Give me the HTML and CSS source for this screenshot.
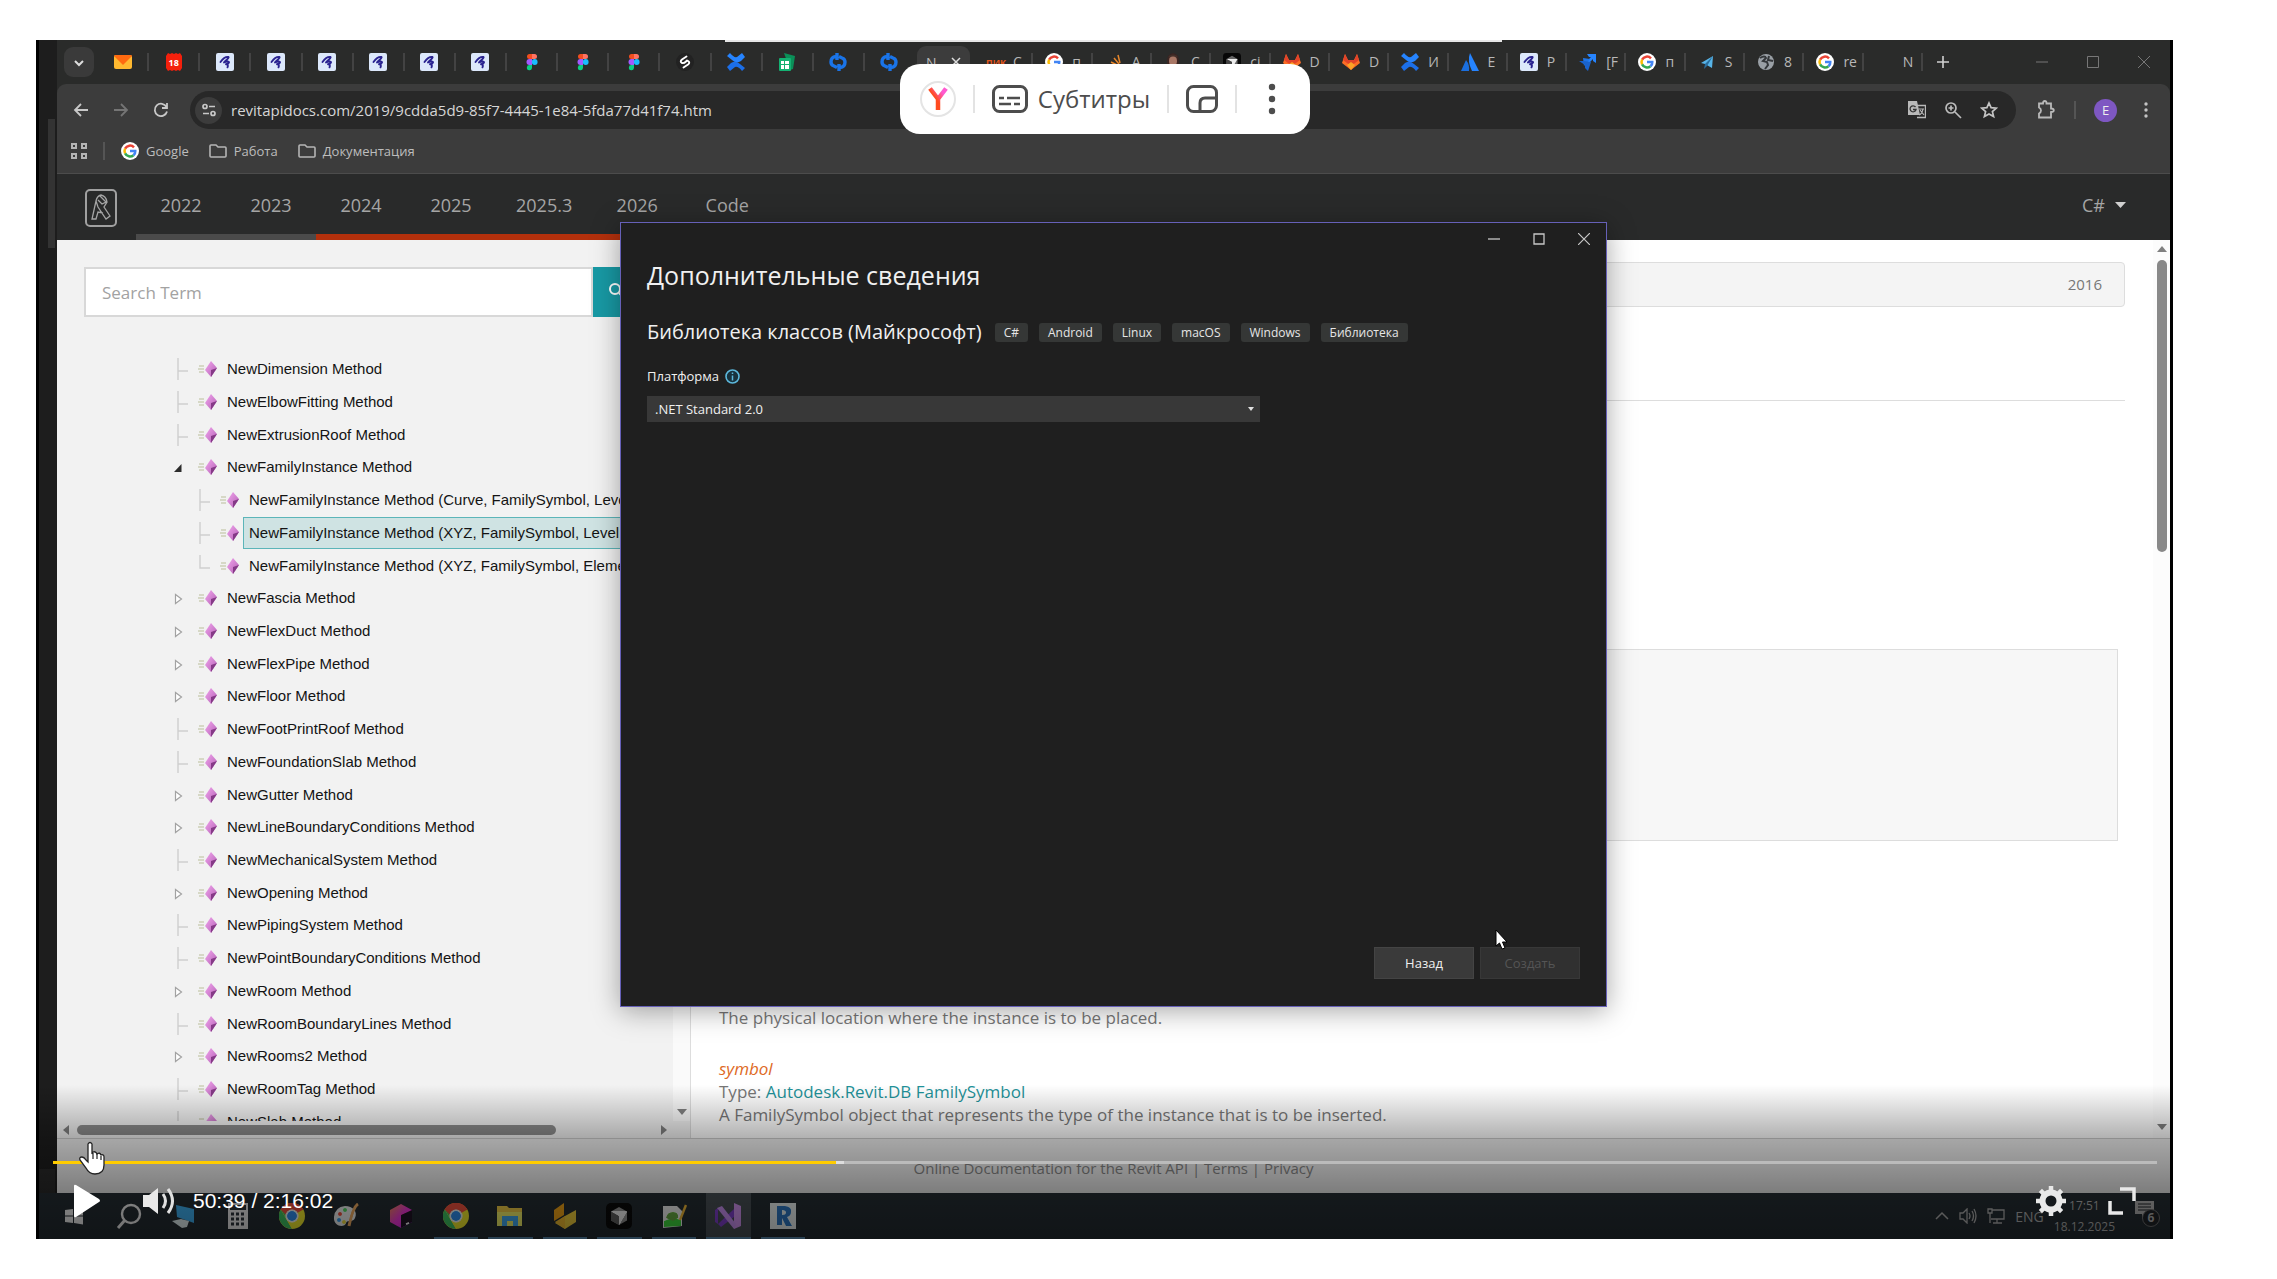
FILE: index.html
```html
<!DOCTYPE html>
<html lang="ru">
<head>
<meta charset="utf-8">
<title>Видео</title>
<link rel="stylesheet" href="styles.css">
</head>
<body>
<svg class="defs" aria-hidden="true">
  <defs>
    <linearGradient id="grad-pink" x1="0" y1="0" x2="1" y2="1"><stop offset="0" stop-color="#f3a6ee"/><stop offset="1" stop-color="#b25fb4"/></linearGradient>
    <linearGradient id="grad-y" x1="0" y1="1" x2="1" y2="0"><stop offset=".45" stop-color="#ff4b1f"/><stop offset=".8" stop-color="#ff5ad0"/></linearGradient>
    <linearGradient id="grad-box" x1="0" y1="0" x2="1" y2="1"><stop offset="0" stop-color="#e0613a"/><stop offset=".5" stop-color="#c0269a"/><stop offset="1" stop-color="#5a1fa0"/></linearGradient>
    <symbol id="mail" viewBox="0 0 18 18"><rect y="2" width="18" height="14" rx="2" fill="#ffb930"/><path d="M0 3q0-1 2-1h14q2 0 2 1L9 12z" fill="#ff6a10"/></symbol>
    <symbol id="cal" viewBox="0 0 18 18"><path d="M3 0l2 1 2-1 2 1 2-1 2 1 2-1 2 3v12l-2 3-2-1-2 1-2-1-2 1-2-1-2 1-2-3V3z" fill="#f4200c"/></symbol>
    <symbol id="squig" viewBox="0 0 18 18"><rect width="18" height="18" rx="2" fill="#dce8fb"/><path d="M4.500 9C7 5.500 10 3.500 12.500 4c1 1-3.500 4-4.500 5.500 2-1 5.500-1.500 5 0-.5 1-1.500 1.500-3 1.800 1.500 0 2.500 1 1.500 3" fill="none" stroke="#2a2390" stroke-width="1.900" stroke-linecap="round" stroke-linejoin="round"/></symbol>
    <symbol id="figma" viewBox="0 0 18 18"><path d="M9 1v5H6.500a2.500 2.500 0 0 1 0-5z" fill="#f24e1e"/><path d="M9 1h2.500a2.500 2.500 0 0 1 0 5H9z" fill="#ff7262"/><path d="M9 6v6H6.500a3 3 0 0 1 0-6z" fill="#a259ff"/><circle cx="11.700" cy="9" r="2.900" fill="#1abcfe"/><path d="M6.500 12H9v3a2.600 2.600 0 1 1-2.500-3z" fill="#0acf83"/></symbol>
    <symbol id="coil" viewBox="0 0 18 18"><circle cx="9" cy="9" r="9" fill="#222"/><path d="M10.500 3.500L6 6.500q-2.500 2 0 3.500 2 .5 4-1.500l1-1M7.500 14.500l4.500-3q2.500-2 0-3.500" fill="none" stroke="#fff" stroke-width="1.900" stroke-linecap="round"/></symbol>
    <symbol id="conf" viewBox="0 0 18 18"><path d="M0 3l3-3q4 5 7 4l5-4 3 4-4 4q-5 3-9-1z" fill="#2684ff"/><path d="M18 15l-3 3q-4-5-7-4l-5 4-3-4 4-4q5-3 9 1z" fill="#1c6fe8"/></symbol>
    <symbol id="sheet" viewBox="0 0 18 18"><path d="M6 0l11 3-2 13-3 1z" fill="#0b8f58"/><rect x="1" y="5" width="12" height="13" rx="1" fill="#14b172"/><path d="M3 8h3v3H3zM7 8h4v3H7zM3 12h3v4H3zM7 12h4v4H7z" fill="#fff"/></symbol>
    <symbol id="code" viewBox="0 0 18 18"><path d="M7 3.500Q2 4 2 9q0 3 3 4l3 1.500M11 14.500Q16 14 16 9q0-3-3-4l-3-1.500M8 0v7M10 11v7" fill="none" stroke="#1a74e8" stroke-width="3.400"/></symbol>
    <symbol id="goog" viewBox="0 0 18 18"><circle cx="9" cy="9" r="9" fill="#fff"/><g fill="none" stroke-width="2.500"><path d="M13 5.300A5.500 5.500 0 0 0 4.100 6.600" stroke="#ea4335"/><path d="M4.100 6.600a5.500 5.500 0 0 0 0 4.800" stroke="#fbbc05"/><path d="M4.100 11.400A5.500 5.500 0 0 0 12.500 13.200" stroke="#34a853"/><path d="M12.500 13.200Q14.500 11.500 14.300 9H9" stroke="#4285f4"/></g></symbol>
    <symbol id="stack" viewBox="0 0 18 18"><path d="M4 16h8M5 12.500l7 1M6 9l7 3.500M9 5l5 6M13 2l2 8" stroke="#e8862a" stroke-width="1.500"/></symbol>
    <symbol id="face" viewBox="0 0 18 18"><path d="M3 18V8q0-7 6-8 6 1 6 8v10z" fill="#3a2522"/><ellipse cx="9" cy="8" rx="4" ry="6" fill="#a97866"/><path d="M5 4q4-3 8 0" stroke="#45302a" stroke-width="2" fill="none"/></symbol>
    <symbol id="cursorapp" viewBox="0 0 26 26"><rect width="26" height="26" rx="5" fill="#070707"/><path d="M13 4l8 4.500v9L13 22l-8-4.500v-9z" fill="#666"/><path d="M5 8.500h16L13 22v-9z" fill="#ececec"/><path d="M5 8.500L13 13v9l-8-4.500z" fill="#444"/></symbol>
    <symbol id="gitlab" viewBox="0 0 18 18"><path d="M3 1l3 6h6l3-6 3 9-9 7-9-7z" fill="#fc6d26"/><path d="M3 1l3 6h6l3-6 2 6-8 6-8-6z" fill="#e24329"/><path d="M5 12l4-3 4 3-4 5z" fill="#fca326"/></symbol>
    <symbol id="atl" viewBox="0 0 18 18"><path d="M9 0l9 18h-7Q6 8 9 0z" fill="#2684ff"/><path d="M5 7q4 5 3 11H0z" fill="#1a6fe0"/></symbol>
    <symbol id="jira" viewBox="0 0 18 18"><path d="M8 1h9v9l-3-2V6l-5 5-2-2 5-5h-2z" fill="#2684ff"/><path d="M4 5l7 1-6 7z" fill="#1f75e6"/><path d="M0 8h5l7 1-3 9-3-3v-3z" fill="#1a63cc"/></symbol>
    <symbol id="plane" viewBox="0 0 18 18"><path d="M15 3L3 10l4 1 7 4z" fill="#57b4e8"/><path d="M15 3L7 11l-1 5 3-3z" fill="#2a6d9c"/></symbol>
    <symbol id="globe" viewBox="0 0 18 18"><circle cx="9" cy="9" r="8" fill="#9aa0a6"/><path d="M3 5q5-3 6 0l-3 3 4 1 1 3-3 4M12 3l-1 4 5 1" fill="none" stroke="#34373a" stroke-width="2"/></symbol>
    <symbol id="folder" viewBox="0 0 18 16"><path d="M2 2h5l2 2h7q1 0 1 1v8q0 1-1 1H2q-1 0-1-1V3q0-1 1-1z" fill="none" stroke="#b5b5b5" stroke-width="1.600"/></symbol>
    <symbol id="leaf" viewBox="0 0 20 22"><path d="M6 0v22M6 13h10" stroke="#cfcfcf" fill="none" stroke-width="1.400"/></symbol>
    <symbol id="leaf-end" viewBox="0 0 20 22"><path d="M6 0v13h10" stroke="#cfcfcf" fill="none" stroke-width="1.400"/></symbol>
    <symbol id="closed" viewBox="0 0 20 22"><path d="M3.500 7.500v9l6-4.500z" stroke="#a2a2a2" fill="#fff" stroke-width="1.200"/></symbol>
    <symbol id="open" viewBox="0 0 20 22"><path d="M2 16h7.500V8z" fill="#2c2c2c"/></symbol>
    <symbol id="method" viewBox="0 0 22 18"><path d="M2 6h5M1 9h6M2 12h5" stroke="#cdd0b8" stroke-width="1.300"/><path d="M14 1l6 7-6 9-6-7z" fill="url(#grad-pink)"/><path d="M14 10l6-2-6 9z" fill="#853a87"/></symbol>
    <symbol id="chrome" viewBox="0 0 26 26"><circle cx="13" cy="13" r="13" fill="#d9a520"/><path d="M13 13L1.700 6.500A13 13 0 0 1 24.300 6.500z" fill="#b8392c"/><path d="M1.700 6.500L13 26A13 13 0 0 1 1.700 6.500z" fill="#2c8a45"/><path d="M1.700 6.500L7.500 16 13 13z" fill="#2c8a45"/><path d="M13 7h11.500A13 13 0 0 0 1.700 6.500L8 13z" fill="#b8392c"/><circle cx="13" cy="13" r="6.500" fill="#cfd3d3"/><circle cx="13" cy="13" r="5" fill="#2265b5"/></symbol>
  </defs>
</svg>

<main class="player">
  <div class="desktop">
    <div class="behind"><span class="behind-thumb"></span><span class="behind-foot"></span></div>
    <div class="browser">
      <div class="tabs">
        <button class="tab-search" aria-label="Поиск вкладок"><svg width="12" height="8" viewBox="0 0 12 8"><path d="M2 1l4 4 4-4" fill="none" stroke="#ddd" stroke-width="2"/></svg></button>
        <div class="pinned">
          <span><svg><use href="#mail"/></svg></span>
          <span class="count"><svg><use href="#cal"/></svg><b>18</b></span>
          <span><svg><use href="#squig"/></svg></span><span><svg><use href="#squig"/></svg></span><span><svg><use href="#squig"/></svg></span><span><svg><use href="#squig"/></svg></span><span><svg><use href="#squig"/></svg></span><span><svg><use href="#squig"/></svg></span>
          <span><svg><use href="#figma"/></svg></span><span><svg><use href="#figma"/></svg></span><span><svg><use href="#figma"/></svg></span>
          <span><svg><use href="#coil"/></svg></span><span><svg><use href="#conf"/></svg></span><span><svg><use href="#sheet"/></svg></span><span><svg><use href="#code"/></svg></span><span><svg><use href="#code"/></svg></span>
        </div>
        <div class="tab-active">N<svg viewBox="0 0 10 10" width="10" height="10"><path d="M1 1l8 8M9 1L1 9" stroke="#ddd" stroke-width="1.500"/></svg></div>
        <div class="titled">
          <span><i class="pik">ПИК</i>C</span><span><svg><use href="#goog"/></svg>п</span><span><svg><use href="#stack"/></svg>A</span><span><svg><use href="#face"/></svg>C</span><span><svg><use href="#cursorapp"/></svg>ci</span><span><svg><use href="#gitlab"/></svg>D</span><span><svg><use href="#gitlab"/></svg>D</span><span><svg><use href="#conf"/></svg>И</span><span><svg><use href="#atl"/></svg>E</span><span><svg><use href="#squig"/></svg>P</span><span><svg><use href="#jira"/></svg>[F</span><span><svg><use href="#goog"/></svg>п</span><span><svg><use href="#plane"/></svg>S</span><span><svg><use href="#globe"/></svg>8</span><span><svg><use href="#goog"/></svg>re</span><span><svg></svg>N</span>
        </div>
        <button class="new-tab" aria-label="Новая вкладка"><svg width="12" height="12" viewBox="0 0 12 12"><path d="M6 0v12M0 6h12" stroke="#d0d0d0" stroke-width="1.600"/></svg></button>
        <div class="win-buttons">
          <svg viewBox="0 0 12 12"><path d="M0 6h12" stroke="#777"/></svg>
          <svg viewBox="0 0 12 12"><path d="M.5.5h11v11H.5z" fill="none" stroke="#777"/></svg>
          <svg viewBox="0 0 12 12"><path d="M0 0l12 12M12 0L0 12" stroke="#777"/></svg>
        </div>
      </div>

      <div class="toolbar">
        <div class="nav-buttons">
          <svg viewBox="0 0 16 16"><path d="M15 8H2M8 2L2 8l6 6" fill="none" stroke="#c8c8c8" stroke-width="1.800"/></svg>
          <svg viewBox="0 0 16 16"><path d="M1 8h13M8 2l6 6-6 6" fill="none" stroke="#757575" stroke-width="1.800"/></svg>
          <svg viewBox="0 0 16 16"><path d="M13.500 5A6.200 6.200 0 1 0 14 9.500M14 1v5H9" fill="none" stroke="#c8c8c8" stroke-width="1.800"/></svg>
        </div>
        <div class="omnibox">
          <span class="site"><svg width="14" height="14" viewBox="0 0 14 14" fill="none" stroke="#c8c8c8" stroke-width="1.700"><circle cx="3" cy="3.500" r="2"/><path d="M7 3.500h6M1 10.500h6"/><circle cx="11" cy="10.500" r="2"/></svg></span>
          <input type="text" class="url" aria-label="Адрес" value="revitapidocs.com/2019/9cdda5d9-85f7-4445-1e84-5fda77d41f74.htm">
          <svg width="18" height="18" viewBox="0 0 18 18"><path d="M0 0h9l3 14H0z" fill="#b9b9b9"/><path d="M8.500 4.500h9v12H9" fill="none" stroke="#b9b9b9" stroke-width="1.400"/><path d="M7.500 6A3 3 0 1 0 8 8.500H5" fill="none" stroke="#333" stroke-width="1.300"/><path d="M10.500 8h5.500M11 14q3-1 4-6M12 9l4 5" fill="none" stroke="#b9b9b9" stroke-width="1.200"/></svg>
          <svg width="18" height="18" viewBox="0 0 18 18" fill="none" stroke="#bcbcbc" stroke-width="1.700"><circle cx="7" cy="7" r="5"/><path d="M11 11l6 6M4.500 7h5M7 4.500v5"/></svg>
          <svg width="18" height="18" viewBox="0 0 18 18"><path d="M9 2l2.100 4.700 5.200.500-3.900 3.400 1.200 5L9 12.900l-4.600 2.700 1.200-5L1.700 7.200l5.200-.5z" fill="none" stroke="#c4c4c4" stroke-width="1.700"/></svg>
        </div>
        <svg width="20" height="20" viewBox="0 0 20 20"><path d="M3 3.500h4q0-2.500 1.800-2.500t1.700 2.500H15v5q2.800 0 2.800 1.700T15 12v5.500H3v-4q2-1 2-3t-2-3z" fill="none" stroke="#b9b9b9" stroke-width="1.800"/></svg>
        <span class="rule"></span>
        <span class="avatar">E</span>
        <svg class="kebab" width="4" height="16" viewBox="0 0 4 16" fill="#c4c4c4"><circle cx="2" cy="2" r="1.700"/><circle cx="2" cy="8" r="1.700"/><circle cx="2" cy="14" r="1.700"/></svg>
      </div>

      <div class="bookmarks">
        <svg width="16" height="16" viewBox="0 0 16 16" fill="none" stroke="#b5b5b5" stroke-width="2"><path d="M1 1h4v4H1zM11 1h4v4h-4zM1 11h4v4H1zM11 11h4v4h-4z"/></svg>
        <span class="rule"></span>
        <a href="#"><svg width="18" height="18"><use href="#goog"/></svg>Google</a>
        <a href="#"><svg width="18" height="16"><use href="#folder"/></svg>Работа</a>
        <a href="#"><svg width="18" height="16"><use href="#folder"/></svg>Документация</a>
      </div>

      <nav class="site-nav">
        <a href="#" class="logo" aria-label="Revit API Docs"><svg width="22" height="30" viewBox="0 0 22 30" fill="none" stroke="#a5a5a5" stroke-width="1.300"><path d="M6 8q1-5 5-6 5 1 6 7l-3 5 6 9-4 3L8 14zM6 8L2 26h4l2-7 5 1M10 3l6 6-4 2-4-4"/></svg></a>
        <a href="#" class="old">2022</a><a href="#" class="old">2023</a><a href="#">2024</a><a href="#">2025</a><a href="#">2025.3</a><a href="#">2026</a><a href="#" class="plain">Code</a>
        <button class="lang">C#<svg width="11" height="6" viewBox="0 0 11 6"><path d="M0 0h11L5.500 6z" fill="#d0d0d0"/></svg></button>
      </nav>

      <div class="page">
        <aside class="sidebar">
          <form class="search"><input type="text" placeholder="Search Term" aria-label="Search Term"><button type="button" aria-label="Search"><svg width="16" height="16" viewBox="0 0 16 16" fill="none" stroke="#fff" stroke-width="2"><circle cx="7" cy="7" r="5"/><path d="M11 11l4 4"/></svg></button></form>
          <div class="tree-view">
            <div class="tree-clip">
              <ul class="tree">
                <li><svg class="ex"><use href="#leaf"/></svg><svg class="me"><use href="#method"/></svg><a href="#">NewDimension Method</a></li>
                <li><svg class="ex"><use href="#leaf"/></svg><svg class="me"><use href="#method"/></svg><a href="#">NewElbowFitting Method</a></li>
                <li><svg class="ex"><use href="#leaf"/></svg><svg class="me"><use href="#method"/></svg><a href="#">NewExtrusionRoof Method</a></li>
                <li><svg class="ex"><use href="#open"/></svg><svg class="me"><use href="#method"/></svg><a href="#">NewFamilyInstance Method</a></li>
                <li class="sub"><svg class="ex"><use href="#leaf"/></svg><svg class="me"><use href="#method"/></svg><a href="#">NewFamilyInstance Method (Curve, FamilySymbol, Level)</a></li>
                <li class="sub"><svg class="ex"><use href="#leaf"/></svg><svg class="me"><use href="#method"/></svg><a href="#" class="selected">NewFamilyInstance Method (XYZ, FamilySymbol, Level, Type)</a></li>
                <li class="sub"><svg class="ex"><use href="#leaf-end"/></svg><svg class="me"><use href="#method"/></svg><a href="#">NewFamilyInstance Method (XYZ, FamilySymbol, Element)</a></li>
                <li><svg class="ex"><use href="#closed"/></svg><svg class="me"><use href="#method"/></svg><a href="#">NewFascia Method</a></li>
                <li><svg class="ex"><use href="#closed"/></svg><svg class="me"><use href="#method"/></svg><a href="#">NewFlexDuct Method</a></li>
                <li><svg class="ex"><use href="#closed"/></svg><svg class="me"><use href="#method"/></svg><a href="#">NewFlexPipe Method</a></li>
                <li><svg class="ex"><use href="#closed"/></svg><svg class="me"><use href="#method"/></svg><a href="#">NewFloor Method</a></li>
                <li><svg class="ex"><use href="#leaf"/></svg><svg class="me"><use href="#method"/></svg><a href="#">NewFootPrintRoof Method</a></li>
                <li><svg class="ex"><use href="#leaf"/></svg><svg class="me"><use href="#method"/></svg><a href="#">NewFoundationSlab Method</a></li>
                <li><svg class="ex"><use href="#closed"/></svg><svg class="me"><use href="#method"/></svg><a href="#">NewGutter Method</a></li>
                <li><svg class="ex"><use href="#closed"/></svg><svg class="me"><use href="#method"/></svg><a href="#">NewLineBoundaryConditions Method</a></li>
                <li><svg class="ex"><use href="#leaf"/></svg><svg class="me"><use href="#method"/></svg><a href="#">NewMechanicalSystem Method</a></li>
                <li><svg class="ex"><use href="#closed"/></svg><svg class="me"><use href="#method"/></svg><a href="#">NewOpening Method</a></li>
                <li><svg class="ex"><use href="#leaf"/></svg><svg class="me"><use href="#method"/></svg><a href="#">NewPipingSystem Method</a></li>
                <li><svg class="ex"><use href="#leaf"/></svg><svg class="me"><use href="#method"/></svg><a href="#">NewPointBoundaryConditions Method</a></li>
                <li><svg class="ex"><use href="#closed"/></svg><svg class="me"><use href="#method"/></svg><a href="#">NewRoom Method</a></li>
                <li><svg class="ex"><use href="#leaf"/></svg><svg class="me"><use href="#method"/></svg><a href="#">NewRoomBoundaryLines Method</a></li>
                <li><svg class="ex"><use href="#closed"/></svg><svg class="me"><use href="#method"/></svg><a href="#">NewRooms2 Method</a></li>
                <li><svg class="ex"><use href="#leaf"/></svg><svg class="me"><use href="#method"/></svg><a href="#">NewRoomTag Method</a></li>
                <li><svg class="ex"><use href="#leaf"/></svg><svg class="me"><use href="#method"/></svg><a href="#">NewSlab Method</a></li>
              </ul>
            </div>
            <div class="vtrack"><svg width="10" height="6" viewBox="0 0 10 6"><path d="M0 0h10L5 6z" fill="#808080"/></svg></div>
            <div class="htrack"><svg width="6" height="10" viewBox="0 0 6 10"><path d="M6 0v10L0 5z" fill="#808080"/></svg><span></span><svg class="right" width="6" height="10" viewBox="0 0 6 10"><path d="M0 0v10l6-5z" fill="#808080"/></svg></div>
          </div>
        </aside>
        <section class="content">
          <div class="versions">2016</div>
          <hr>
          <pre class="syntax"></pre>
          <p>The physical location where the instance is to be placed.</p>
          <p class="param"><em>symbol</em><br>Type: <a href="#">Autodesk.Revit.DB FamilySymbol</a><br>A FamilySymbol object that represents the type of the instance that is to be inserted.</p>
        </section>
        <div class="scrollbar"><svg width="10" height="6" viewBox="0 0 10 6"><path d="M0 6h10L5 0z" fill="#808080"/></svg><span></span><svg class="down" width="10" height="6" viewBox="0 0 10 6"><path d="M0 0h10L5 6z" fill="#808080"/></svg></div>
      </div>
      <footer class="site-foot">Online Documentation for the Revit API | Terms | Privacy</footer>
    </div>
  </div>

  <div class="taskbar">
    <div class="apps">
      <span><svg width="18" height="18" viewBox="0 0 18 18"><path d="M0 3l8-1v6.500H0zM9 2l9-1.500v8H9zM0 9.500h8V16l-8-1zM9 9.500h9v8L9 16z" fill="#b5b5b5"/></svg></span>
      <span><svg width="26" height="26" viewBox="0 0 26 26"><path d="M9 17l-7 8" stroke="#a8a8a8" stroke-width="3"/><circle cx="15" cy="11" r="9" fill="none" stroke="#a8a8a8" stroke-width="2.400"/></svg></span>
      <span><svg width="26" height="26" viewBox="0 0 26 26"><path d="M6 2l18 4v14L7 14z" fill="#2c7cb0"/><path d="M2 18l9-2 8 2-2 6-5 1z" fill="#9fa9ad"/></svg></span>
      <span><svg width="20" height="26" viewBox="0 0 20 26"><path d="M0 0h20v26H0z" fill="#a5a5a5"/><path d="M2 2h16v5H2z" fill="#20252a"/><path d="M3 11h14M3 16h14M3 21h14" stroke="#20252a" stroke-width="3" stroke-dasharray="3 2"/></svg></span>
      <span><svg width="26" height="26"><use href="#chrome"/></svg></span>
      <span><svg width="28" height="26" viewBox="0 0 28 26"><path d="M12 3c8 0 13 6 10 12-2 5-7 1-9 5-1 5-13 4-12-6Q2 4 12 3z" fill="#a9b8c0"/><circle cx="7" cy="11" r="2" fill="#c0392b"/><circle cx="12" cy="7" r="2" fill="#3f9a45"/><circle cx="6" cy="17" r="2" fill="#2b70b0"/><circle cx="11" cy="19" r="2" fill="#d19c2d"/><path d="M25 1q-5 3-9 22" stroke="#b07a45" stroke-width="3" fill="none"/></svg></span>
      <span><svg width="24" height="26" viewBox="0 0 24 26"><path d="M12 1l11 6v12l-11 6L1 19V7z" fill="url(#grad-box)"/><path d="M12 12l11-5v12l-11 6z" fill="#160d1a"/><path d="M17 21l3-1" stroke="#ddd" stroke-width="1.500"/></svg></span>
      <span class="run"><svg width="26" height="26"><use href="#chrome"/></svg></span>
      <span class="run"><svg width="26" height="24" viewBox="0 0 26 24"><path d="M0 2h10l2 2h13v18H0z" fill="#bd9032"/><path d="M0 8h25v14H0z" fill="#d2a94a"/><path d="M5 12h16v10h-5v-5h-6v5H5z" fill="#2d78b5"/></svg></span>
      <span class="run"><svg width="24" height="26" viewBox="0 0 24 26"><path d="M11 0v12L1 18V7z" fill="#c67310"/><path d="M12 13l11-6v12l-11 7-10-6z" fill="#e0912a"/><path d="M12 13v13L2 19z" fill="#cf8422"/></svg></span>
      <span class="run"><svg width="26" height="26"><use href="#cursorapp"/></svg></span>
      <span class="run"><svg width="26" height="26" viewBox="0 0 26 26"><path d="M2 3h14l5 5v15l-19 2z" fill="#bfc6bd"/><path d="M3 18q8-4 17-1v6L3 24z" fill="#2c9a2c"/><path d="M5 15q1-6 7-6t5 6l-5 3z" fill="#4a7a30"/><path d="M25 2l-6 15" stroke="#b98227" stroke-width="2.500"/></svg></span>
      <span class="run current"><svg width="26" height="26" viewBox="0 0 26 26"><path d="M19 0l7 3v20l-7 3z" fill="#9468c8"/><path d="M0 7l3-2v16l-3-2z" fill="#5b2d91"/><path d="M3 21L19 6v8L6 24z" fill="#5b2d91"/><path d="M2 5l5-2 14 18-2 5z" fill="#8d66b8"/></svg></span>
      <span class="run"><svg width="26" height="26" viewBox="0 0 26 26"><rect width="26" height="26" fill="#a5b6c8"/><path d="M7 3h8q7 1 6 6 0 4-4 5l5 9h-6l-4-8v7H7zM12 7v5q4 0 4-2.500T12 7z" fill="#205489" fill-rule="evenodd"/></svg></span>
    </div>
    <div class="tray">
      <svg width="14" height="10" viewBox="0 0 14 10"><path d="M1 8l6-6 6 6" fill="none" stroke="#bbb" stroke-width="1.500"/></svg>
      <svg width="18" height="16" viewBox="0 0 18 16" fill="none" stroke="#bbb" stroke-width="1.300"><path d="M1 5h3l4-4v14l-4-4H1zM10 5q2 3 0 6M13 3q3 5 0 10M15 1q4 7 0 14"/></svg>
      <svg width="18" height="16" viewBox="0 0 18 16" fill="none" stroke="#bbb" stroke-width="1.300"><path d="M5 2h12v9H4M10 11v4M6 15h9M1 1h4v4H1zM3 5v10"/></svg>
      <span>ENG</span>
      <span class="clock">17:51<br>18.12.2025</span>
      <span class="notice"><svg width="20" height="18" viewBox="0 0 20 18"><path d="M0 0h19v13h-8l-4 5v-5H0z" fill="#bbb"/><path d="M3 3h13M3 6h13M3 9h13" stroke="#22262a"/></svg><b>6</b></span>
    </div>
  </div>

  <div class="top-line"></div>

  <section class="dialog" role="dialog" aria-labelledby="dlg-title">
    <div class="dialog-controls">
      <svg viewBox="0 0 12 12"><path d="M0 6h12" stroke="#c8c8c8" stroke-width="1.300"/></svg>
      <svg viewBox="0 0 12 12"><path d="M1 1h10v10H1z" fill="none" stroke="#c8c8c8" stroke-width="1.300"/></svg>
      <svg viewBox="0 0 12 12"><path d="M0 0l12 12M12 0L0 12" stroke="#c8c8c8" stroke-width="1.200"/></svg>
    </div>
    <h1 id="dlg-title">Дополнительные сведения</h1>
    <div class="template"><h2>Библиотека классов (Майкрософт)</h2><span>C#</span><span>Android</span><span>Linux</span><span>macOS</span><span>Windows</span><span>Библиотека</span></div>
    <label class="field-label" for="platform">Платформа <svg width="15" height="15" viewBox="0 0 15 15"><circle cx="7.500" cy="7.500" r="6.500" fill="#18333e" stroke="#5cb8dc" stroke-width="1.600"/><path d="M7.500 6.500v5M7.500 3.500v1.500" stroke="#5cb8dc" stroke-width="1.500"/></svg></label>
    <div class="select"><select id="platform"><option>.NET Standard 2.0</option></select><svg width="6" height="4" viewBox="0 0 6 4"><path d="M0 0h6L3 4z" fill="#e0e0e0"/></svg></div>
    <div class="dialog-actions"><button>Назад</button><button disabled>Создать</button></div>
    <svg class="pointer" width="14" height="22" viewBox="0 0 14 22"><path d="M1 1v16l3.500-3 2.500 6 3-1-2.500-6H12z" fill="#fff" stroke="#000"/></svg>
  </section>

  <div class="shade"></div>

  <div class="yandex">
    <span class="ya"><svg width="20" height="24" viewBox="0 0 20 24"><path d="M2 1.500L10 12v11M10 12l8-10.500" fill="none" stroke="url(#grad-y)" stroke-width="4.500"/></svg></span>
    <span class="rule"></span>
    <button class="subs"><svg width="36" height="28" viewBox="0 0 36 28" fill="none" stroke="#4d4d4d" stroke-width="3"><rect x="1.500" y="1.500" width="33" height="25" rx="6"/><path d="M7 13h5M15 13h13M7 19h12M22 19h6" stroke-width="2.500"/></svg>Субтитры</button>
    <span class="rule"></span>
    <svg width="32" height="28" viewBox="0 0 32 28" fill="none" stroke="#4d4d4d" stroke-width="3"><rect x="1.500" y="1.500" width="29" height="25" rx="6"/><path d="M14 26v-8q0-5 5-5h11"/></svg>
    <span class="rule"></span>
    <svg class="more" width="8" height="32" viewBox="0 0 8 32" fill="#4d4d4d"><circle cx="4" cy="4" r="3.200"/><circle cx="4" cy="16" r="3.200"/><circle cx="4" cy="28" r="3.200"/></svg>
  </div>

  <div class="controls">
    <div class="progress"><span class="played"></span><span class="buffered"></span></div>
    <div class="control-row">
      <button aria-label="Воспроизвести"><svg width="28" height="34" viewBox="0 0 28 34"><path d="M1 2q0-2 2-1l23 14q2 2 0 3L3 33q-2 1-2-1z" fill="#fff"/></svg></button>
      <button class="volume" aria-label="Громкость"><svg width="34" height="28" viewBox="0 0 34 28"><path d="M1 8h6l9-7v26l-9-7H1z" fill="#e8e8e8"/><path d="M21 7q5 7 0 14M26 2q9 12 0 24" fill="none" stroke="#e0e0e0" stroke-width="3"/></svg></button>
      <span class="time">50:39 / 2:16:02</span>
      <button class="gear" aria-label="Настройки"><svg width="32" height="32" viewBox="0 0 32 32"><circle cx="16" cy="16" r="8.500" fill="none" stroke="#e8e8e8" stroke-width="6"/><path d="M16 1v6M16 25v6M1 16h6M25 16h6M5.400 5.400l4.200 4.200M22.400 22.400l4.200 4.200M26.600 5.400l-4.200 4.200M9.600 22.400l-4.200 4.200" stroke="#e8e8e8" stroke-width="4.500"/></svg></button>
      <button class="full" aria-label="Во весь экран"><svg width="30" height="30" viewBox="0 0 30 30"><path d="M13 3h14v12M3 15v12h13" fill="none" stroke="#e8e8e8" stroke-width="3.500"/></svg></button>
    </div>
  </div>
  <svg class="hand" width="26" height="34" viewBox="0 0 26 34"><path d="M9 3q2-3 4 0v10l1-2q3-1 4 2 3-2 4 1 3-1 3 2v8q0 9-9 9-6 0-9-6l-6-8q-1-3 2-3 2 0 4 3l2 2z" fill="#fff" stroke="#222" stroke-width="1.300"/><path d="M14 12v6M18 13v5M22 15v4" stroke="#222" stroke-width="1.200"/></svg>
</main>
</body>
</html>
```
FILE: styles.css
```css
* { box-sizing: border-box; }
body { margin: 0; padding: 40px 104px 40px 36px; background: #fff; font-family: "Open Sans", "Noto Sans", sans-serif; }
a { color: inherit; text-decoration: none; }
button, input, select { font: inherit; color: inherit; border: 0; padding: 0; background: none; }
svg { flex: none; }
.defs { position: absolute; width: 0; height: 0; }
.rule { width: 2px; background: #555; }

.player { position: relative; display: flex; flex-direction: column; min-height: calc(100vh - 80px); padding: 0 3px; background: #000; overflow: hidden; }
.desktop { flex: 1; display: flex; min-height: 0; }
.behind { width: 18px; background: #1d1d1d; display: flex; flex-direction: column; align-items: flex-end; justify-content: space-between; padding: 79px 2px 0 0; }
.behind-thumb { width: 7px; height: 129px; background: #333; }
.behind-foot { width: 16px; height: 24px; background: #2a2a2a; }
.browser { flex: 1; min-width: 0; display: flex; flex-direction: column; background: #2a2b2a; }

/* tab strip */
.tabs { height: 44px; display: flex; align-items: center; padding-left: 7px; color: #b8b8b8; font-size: 14px; background: #2a2b2a; }
.tab-search { width: 30px; height: 30px; border-radius: 9px; background: #3a3a3a; margin-right: 4px; }
.pinned { display: flex; width: 816px; }
.pinned span, .titled span { flex: 1; min-width: 0; height: 18px; display: flex; align-items: center; justify-content: center; border-right: 2px solid #434343; }
.pinned span:last-child { border: 0; }
.pinned svg, .titled svg { width: 18px; height: 18px; }
.count { position: relative; }
.count b { position: absolute; font-size: 9px; color: #fff; }
.tab-active { width: 53px; height: 32px; margin: 0 4px 0 3px; padding: 0 9px; display: flex; align-items: center; justify-content: space-between; border-radius: 9px; background: #3c3c3c; }
.titled { display: flex; width: 949px; }
.titled span { justify-content: flex-start; gap: 9px; padding-left: 12px; overflow: hidden; white-space: nowrap; line-height: 18px; }
.pik { width: 18px; font: bold 9px "Open Sans", sans-serif; color: #e6571c; }
.new-tab { width: 40px; height: 30px; }
.win-buttons { margin-left: auto; margin-right: 20px; display: flex; gap: 39px; }
.win-buttons svg, .dialog-controls svg { width: 12px; height: 12px; }

/* toolbar */
.toolbar { height: 52px; display: flex; align-items: center; padding: 0 22px 0 16px; background: #3c3c3c; border-radius: 9px 9px 0 0; }
.nav-buttons { display: flex; gap: 24px; width: 117px; }
.nav-buttons svg { width: 16px; height: 16px; }
.omnibox { flex: 1; height: 38px; display: flex; align-items: center; gap: 18px; padding: 0 18px 0 5px; margin-right: 20px; border-radius: 19px; background: #282828; color: #d6d6d6; font-size: 15px; }
.site { width: 27px; height: 27px; display: grid; place-items: center; border-radius: 50%; background: #3c3c3c; margin-right: -9px; }
.url { flex: 1; min-width: 0; }
.toolbar .rule { height: 18px; margin: 0 18px; }
.avatar { width: 23px; height: 23px; border-radius: 50%; background: #7e57c2; color: #eee; font-size: 13px; line-height: 23px; text-align: center; }
.kebab { margin-left: 27px; }
.bookmarks { height: 38px; display: flex; align-items: center; padding: 0 14px 8px; background: #3c3c3c; border-bottom: 1px solid #4c4c4c; color: #bdbdbd; font-size: 13px; }
.bookmarks .rule { height: 18px; margin: 0 16px; }
.bookmarks a { display: flex; align-items: center; gap: 7px; margin-right: 20px; }

/* site header */
.site-nav { height: 66px; display: flex; padding-left: 28px; background: #292a2a; color: #a5a5a5; font-size: 18px; line-height: 62px; }
.logo { width: 32px; height: 38px; margin: 15px 19px 0 0; display: grid; place-items: center; border: 2px solid #a0a0a0; border-radius: 5px; }
.site-nav > a:not(.logo) { min-width: 90px; padding: 0 20px; border-bottom: 6px solid #b3300c; height: 66px; text-align: center; }
.site-nav > a.old { border-color: #4a4a4a; }
.site-nav > a.plain { border-color: transparent; }
.lang { margin-left: auto; margin-right: 44px; display: flex; align-items: center; gap: 10px; height: 62px; }

/* documentation page */
.page { flex: 1; display: flex; background: #fff; }
.sidebar { width: 634px; display: flex; flex-direction: column; border-right: 1px solid #ddd; background: #f2f2f2; }
.search { height: 50px; margin: 27px 28px 0 27px; display: flex; }
.search input { width: 509px; padding: 0 16px; border: 2px solid #d8d8d8; background: #fff; font-size: 17px; }
.search input::placeholder { color: #a2a2a2; }
.search button { flex: 1; background: #1899a4; padding-right: 24px; }
.tree-view { flex: 1; margin-top: 36px; display: grid; grid-template: 1fr 17px / 1fr 17px; min-height: 0; }
.tree-clip { overflow: hidden; height: 768px; }
.tree { list-style: none; margin: 0; padding: 0 0 0 115px; height: 785px; display: grid; grid-template-rows: repeat(24, 1fr); font-family: "Liberation Sans", Arial, sans-serif; font-size: 15px; color: #141414; }
.tree li { display: flex; align-items: center; white-space: nowrap; min-height: 0; }
.tree .sub { padding-left: 22px; }
.ex { width: 20px; height: 22px; margin-right: 5px; }
.me { width: 22px; height: 18px; margin-right: 2px; }
.tree a { padding: 0 5px; border: 1px solid transparent; height: 32px; line-height: 29px; }
.tree .selected { background: #cfe3e3; border-color: #5cb5b9; }
.vtrack { display: flex; align-items: flex-end; justify-content: center; padding-bottom: 6px; background: #fafafa; }
.htrack { display: flex; align-items: center; padding: 0 6px; }
.htrack span { width: 479px; height: 10px; margin-left: 8px; border-radius: 5px; background: #8b8b8b; }
.htrack .right { margin-left: auto; }
.content { flex: 1; padding: 22px 28px 0; color: #777; font-size: 17px; line-height: 23px; }
.versions { height: 45px; padding-right: 22px; border: 1px solid #ddd; border-radius: 4px; background: #f4f4f4; text-align: right; font-size: 15px; line-height: 43px; }
.content hr { border: 0; border-top: 1px solid #ddd; margin: 93px 0 248px; }
.syntax { height: 192px; margin: 0 7px 0 0; border: 1px solid #ddd; background: #f7f7f7; }
.content p { margin: 165px 0 28px; }
.content p.param { margin: 0; }
.content em { color: #de6a25; }
.content a { color: #1f9299; }
.scrollbar { width: 17px; padding: 6px 0 8px; display: flex; flex-direction: column; align-items: center; background: #fcfcfc; }
.scrollbar span { width: 10px; height: 292px; margin-top: 8px; border-radius: 5px; background: #898989; }
.scrollbar .down { margin-top: auto; }
.site-foot { height: 55px; padding-top: 6px; border-top: 1px solid #ccc; background: #f0f0f0; color: #888; font-size: 15px; line-height: 46px; text-align: center; }

/* taskbar */
.taskbar { height: 46px; display: flex; justify-content: space-between; background: #262f35; color: #bbb; }
.apps { display: grid; grid-template-columns: repeat(14, 1fr); width: 771px; padding-left: 8px; }
.apps span { display: grid; place-items: center; }
.apps svg { filter: brightness(1.5); }
.apps .run { margin: 0 5px; border-bottom: 2px solid #5f94bb; padding-top: 2px; }
.apps .current { background-color: #4c545a; }
.tray { display: flex; align-items: center; gap: 10px; padding-right: 8px; font-size: 14px; }
.clock { font-size: 12px; line-height: 21px; text-align: center; }
.notice { position: relative; width: 37px; height: 30px; padding-left: 10px; }
.notice b { position: absolute; left: 17px; top: 8px; width: 18px; height: 18px; border: 1px solid #777; border-radius: 50%; background: #22262a; font-size: 12px; line-height: 16px; text-align: center; }

.top-line { position: absolute; top: 0; left: 689px; width: 777px; height: 2px; background: #e6e6e6; }

/* floating window */
.dialog { position: absolute; left: 584px; top: 182px; width: 987px; height: 785px; padding: 8px 26px 27px; display: flex; flex-direction: column; border: 1px solid #6660b8; background: #1f1f1f; color: #f0f0f0; box-shadow: 0 4px 26px rgba(0, 0, 0, .35); }
.dialog-controls { display: flex; gap: 33px; margin-left: auto; padding-top: 2px; margin-right: -10px; }
.dialog h1 { margin: 13px 0 0; font-size: 25px; line-height: 34px; font-weight: 400; }
.template { display: flex; align-items: center; gap: 11px; margin-top: 24px; font-size: 12px; height: 32px; }
.template h2 { margin: 0 2px 0 0; font-size: 20px; line-height: 32px; font-weight: 400; }
.template span { padding: 0 9px; border-radius: 3px; background: #353736; line-height: 19px; color: #e6e6e6; }
.field-label { display: flex; align-items: center; gap: 6px; margin-top: 18px; height: 20px; font-size: 13px; }
.select { display: grid; width: 613px; margin-top: 10px; }
.select select { grid-area: 1 / 1; height: 26px; padding-left: 8px; appearance: none; background: #383838; font-size: 13px; }
.select svg { grid-area: 1 / 1; place-self: center end; margin-right: 6px; }
.dialog-actions { display: flex; justify-content: flex-end; gap: 6px; margin-top: auto; }
.dialog-actions button { width: 100px; height: 32px; border: 1px solid #444; background: #3a3a3a; font-size: 13px; }
.dialog-actions button:disabled { background: #303030; border-color: #383838; color: #555; }
.pointer { position: absolute; left: 874px; top: 706px; }

/* player chrome */
.shade { position: absolute; inset: auto 0 0; height: 154px; background: linear-gradient(transparent, rgba(0, 0, 0, .3) 34%, rgba(0, 0, 0, .48) 70%, rgba(0, 0, 0, .56)); }
.yandex { position: absolute; left: 864px; top: 24px; width: 410px; height: 70px; padding: 0 20px; display: flex; align-items: center; justify-content: space-between; border-radius: 20px; background: #fff; color: #4d4d4d; }
.yandex .rule { height: 28px; background: #e3e3e3; }
.ya { width: 36px; height: 36px; display: grid; place-items: center; border: 2px solid #e4e4e4; border-radius: 50%; }
.subs { display: flex; align-items: center; gap: 10px; font-size: 24px; line-height: 28px; }
.more { margin: 0 14px; }
.controls { position: absolute; inset: auto 16px 21px 17px; }
.progress { display: flex; height: 3px; background: #bbb; margin-bottom: 20px; }
.played { width: 783px; background: #ffcc00; }
.buffered { width: 8px; background: #ddd; }
.control-row { display: flex; align-items: center; height: 34px; padding: 0 20px; color: #fff; }
.control-row button { display: flex; }
.volume { margin-left: 41px; }
.time { margin-left: 17px; font: 21px "Liberation Sans", Arial, sans-serif; }
.gear { margin-left: auto; margin-right: 40px; }
.hand { position: absolute; left: 43px; top: 1101px; }
```
